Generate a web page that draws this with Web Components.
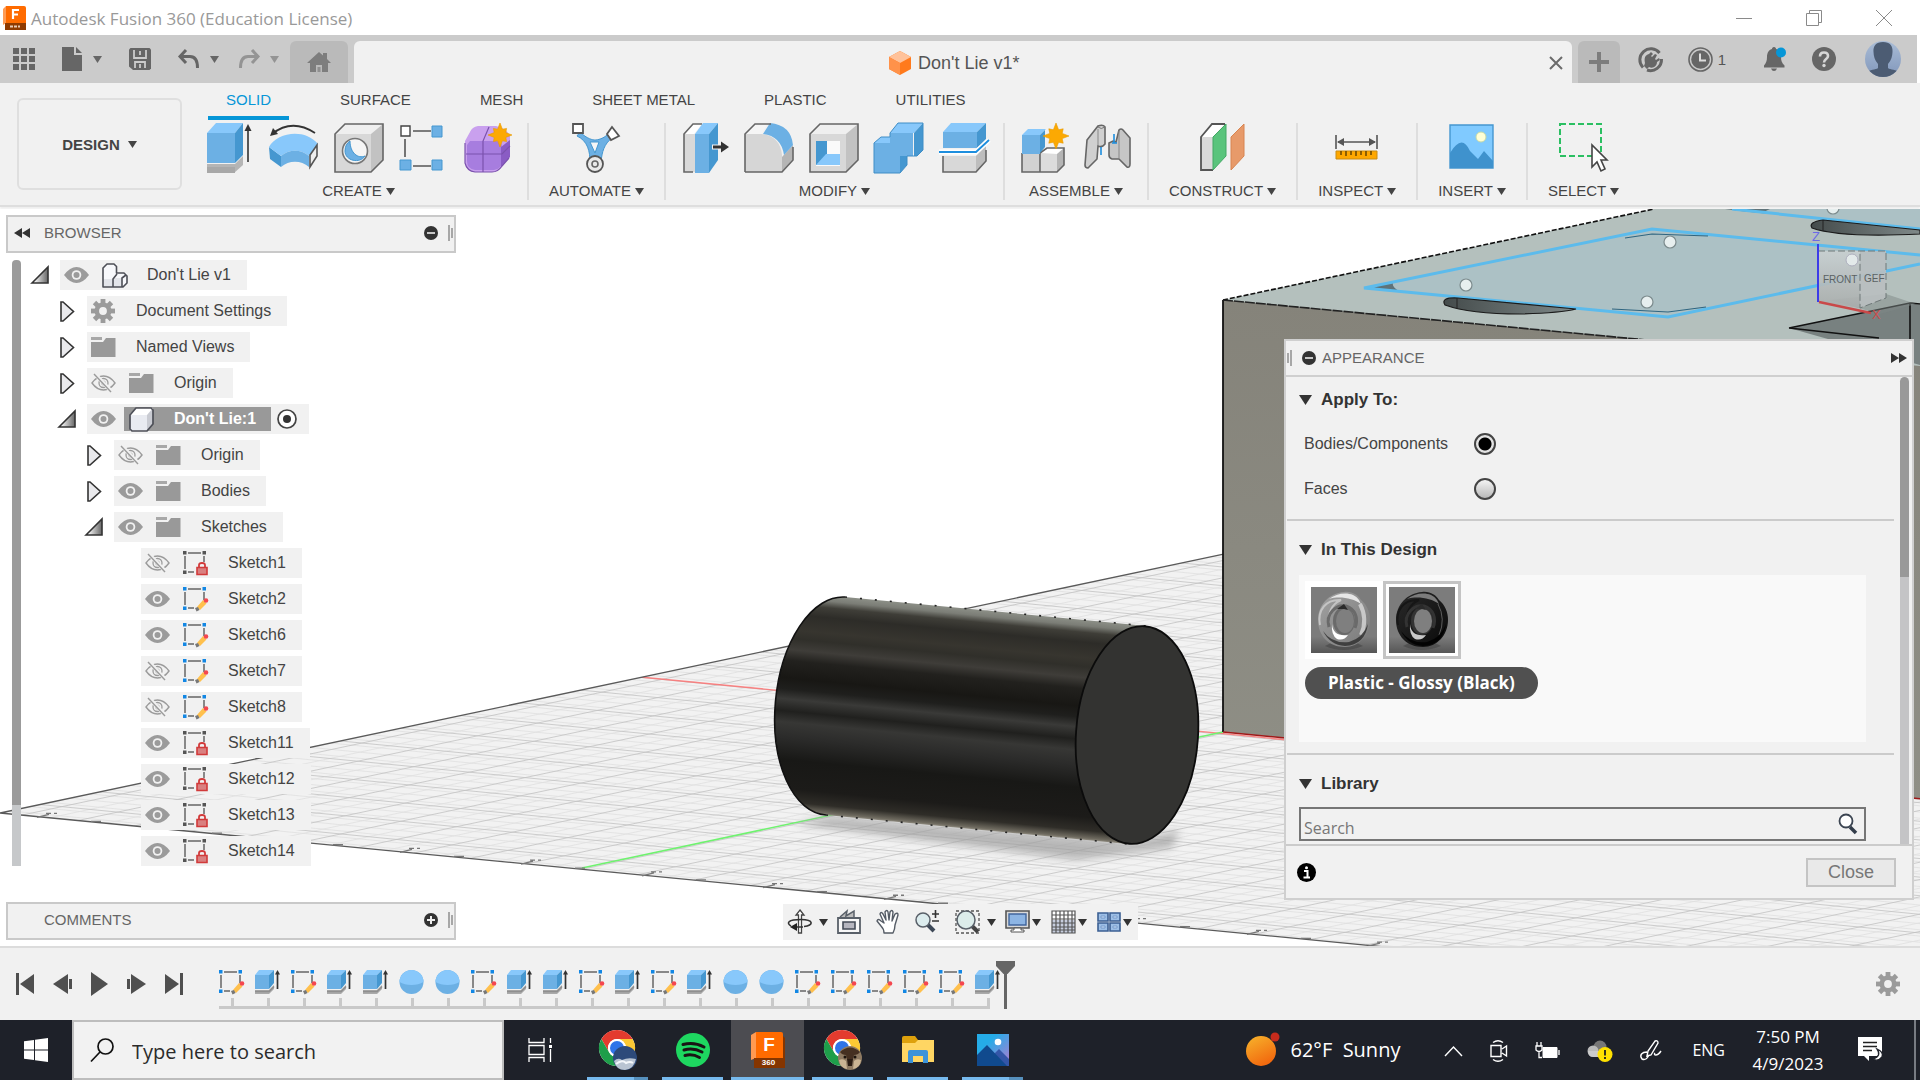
<!DOCTYPE html>
<html lang="en">
<head>
<meta charset="utf-8">
<title>Autodesk Fusion 360 (Education License)</title>
<style>
  html, body { margin: 0; height: 100%; }
  body {
    font-family: "Liberation Sans", Arial, sans-serif;
    font-size: 16px;
    color: #444;
    background: #fff;
    overflow: hidden;
    --ui: "Open Sans", "Noto Sans", sans-serif;
    --panel: #f1f1f1;
    --line: #c9c9c9;
    --blue: #0696d7;
  }
</style>
</head>
<body>
<fusion-app></fusion-app>

<script>
const B1 = '#6cb0e4', B2 = '#88c8fb', B3 = '#4597d0', BS = '#3f8dc6', G = '#666';

const star = (x, y, r, fill = '#fca903') => {
  let d = '';
  for (let i = 0; i < 16; i++) {
    const a = Math.PI * i / 8, q = i % 2 ? r * 0.52 : (i % 4 ? r * 0.78 : r);
    d += `${(x + q * Math.sin(a)).toFixed(1)},${(y - q * Math.cos(a)).toFixed(1)} `;
  }
  return `<polygon points="${d}" fill="${fill}" stroke="#e79a00" stroke-width=".6"/>`;
};

const gear = fill => {
  let teeth = '';
  for (let i = 0; i < 8; i++) teeth += `<rect x="9.6" y="0" width="4.8" height="6" fill="${fill}" transform="rotate(${i * 45} 12 12)"/>`;
  return `${teeth}<circle cx="12" cy="12" r="6.2" fill="none" stroke="${fill}" stroke-width="4.6"/>`;
};

const cubeFace = (w = 1.6) => `fill="none" stroke="#4d4f57" stroke-width="${w}" stroke-linejoin="round"`;

const chrome = `
  <circle cx="19" cy="18" r="18" fill="#fff"/>
  <path d="M3.4 9A18 18 0 0 1 19 0a18 18 0 0 1 15.6 9H19a9 9 0 0 0-7.8 13.5z" fill="#e33b2e"/>
  <path d="M34.6 9A18 18 0 0 1 19 36l7.8-13.5A9 9 0 0 0 19 9z" fill="#fcc934"/>
  <path d="M3.4 9A18 18 0 0 0 19 36l7.8-13.5a9 9 0 0 1-15.6 0z" fill="#1e9e4a"/>
  <circle cx="19" cy="18" r="9" fill="#fff"/><circle cx="19" cy="18" r="7" fill="#2f74e8"/>`;

// name: [width, height, markup]
const ICONS = {
  caret: [9, 7, '<path d="M0 0h9L4.5 7z" fill="currentColor"/>'],
  triangle: [13, 10, '<path d="M0 0h13L6.5 10z" fill="#333"/>'],
  app: [23, 24, `<path d="M3 0h18q2 0 2 2v15H3z" fill="#ff6b00"/><path d="M3 0L0 3v16l3-2z" fill="#ff9b54"/>
    <path d="M2 17h21v7H2z" fill="#8f3a00"/><path d="M10 13V4h6M10 8.5h5" stroke="#fff" stroke-width="2.2" fill="none"/>
    <path d="M7 20.5h10" stroke="#e8c9b4" stroke-width="2" stroke-dasharray="3 1"/>`],
  minimize: [16, 16, '<path d="M0 8.5h16" stroke="#8a8a8a"/>'],
  restore: [16, 16, '<path d="M.5 3.5h12v12H.5zM3.5 3.5v-3h12v12h-3" fill="none" stroke="#8a8a8a"/>'],
  close: [16, 16, '<path d="M0 0l16 16M16 0L0 16" stroke="#8a8a8a"/>'],
  grid9: [22, 22, `<path d="M0 0h6v6H0zM8 0h6v6H8zM16 0h6v6h-6zM0 8h6v6H0zM8 8h6v6H8zM16 8h6v6h-6zM0 16h6v6H0zM8 16h6v6H8zM16 16h6v6h-6z" fill="${G}"/>`],
  file: [21, 24, `<path d="M0 0h12v8h8v16H0z" fill="${G}"/><path d="M14 0v6h6z" fill="${G}"/>`],
  save: [22, 22, `<path d="M1.5 0h19L22 1.5v19L20.5 22H4l-4-3.5v-17z" fill="${G}"/><path d="M5 2v8h12V2M11 3v4" fill="none" stroke="#cbcbcb" stroke-width="1.8"/><path d="M6 20v-6h10v6M11 16v4" fill="none" stroke="#cbcbcb" stroke-width="1.8"/>`],
  undo: [22, 20, '<path d="M8 1L2 7.5 8 14M2.5 7.5H12q7.5 0 7.5 11.5" fill="none" stroke="currentColor" stroke-width="3"/>'],
  redo: [22, 20, '<path d="M14 1l6 6.5-6 6.5M19.5 7.5H10q-7.5 0-7.5 11.5" fill="none" stroke="currentColor" stroke-width="3"/>'],
  home: [24, 20, '<path d="M12 0l4 3.5V1h4v6l4 4h-3v9h-6v-7h-6v7H3v-9H0z" fill="#7d7d7d"/><path d="M10.5 15h3v5h-3z" fill="#8f8f8f"/>'],
  doccube: [22, 24, '<path d="M11 0l11 6v12l-11 6L0 18V6z" fill="#ff7a1c"/><path d="M11 0l11 6-11 6L0 6z" fill="#ffc29a"/><path d="M0 6l11 6v12L0 18z" fill="#ff924a"/>'],
  tabclose: [14, 14, '<path d="M1 1l12 12M13 1L1 13" stroke="#6b6b6b" stroke-width="2"/>'],
  plus: [20, 20, '<path d="M10 0v20M0 10h20" stroke="#7d7d7d" stroke-width="4"/>'],
  plug: [25, 25, `<path d="M5 20.5A11 11 0 1 1 21.5 6M23.5 12A11 11 0 0 1 9 23" fill="none" stroke="${G}" stroke-width="3"/>
    <path d="M7 16c-1-5 0-8 4-9l2-2 2 2-2 2 1 1 3-3 2 1-2 4 1 1 3-2 1 2-3 2c0 4-4 7-8 5l-2 2-3-3z" fill="${G}"/>`],
  clock: [25, 25, `<circle cx="12.5" cy="12.5" r="11.5" fill="none" stroke="${G}" stroke-width="1.6"/><circle cx="12.5" cy="12.5" r="9.3" fill="${G}"/><path d="M12 6.5v7h6" fill="none" stroke="#ddd" stroke-width="2"/>`],
  bell: [24, 24, `<path d="M10 0c1.5 0 2 1 2 2 4 1 5 5 5 8 0 4 1 6 3.5 8.5v2H0v-2C2 16 3 14 3 10c0-3 1-7 5-8 0-1 .5-2 2-2zM7 21.5h6q-1 2.5-3 2.5t-3-2.5z" fill="${G}"/><circle cx="17" cy="5.5" r="5" fill="#0696d7"/>`],
  help: [24, 24, `<circle cx="12" cy="12" r="12" fill="${G}"/><path d="M8 9.5q0-4 4-4t4 3.5c0 3-4 3-4 6.5" fill="none" stroke="#d6d6d6" stroke-width="2.6"/><circle cx="12" cy="18.5" r="1.7" fill="#d6d6d6"/>`],
  avatar: [36, 36, `<defs><linearGradient id="a" x2="0" y2="1"><stop offset="0" stop-color="#a9bcd6"/><stop offset="1" stop-color="#8197bb"/></linearGradient><clipPath id="c"><circle cx="18" cy="18" r="18"/></clipPath></defs>
    <g clip-path="url(#c)"><path d="M0 0h36v36H0z" fill="url(#a)"/><path d="M18 1c7 0 10 4 9.5 10-.2 4-1 8-4.5 12v4c2 2 9 1 11 5v4H2v-4c2-4 9-3 11-5v-4c-3.5-4-4.3-8-4.5-12C8 5 11 1 18 1z" fill="#4c5c73"/></g>`],

  extrude: [50, 50, `<path d="M3 41h28l8-8v9l-9 8H3z" fill="#b5b5b5"/><path d="M3 44h28v6H3z" fill="#a8a8a8"/><path d="M3 10h28v30H3z" fill="${B1}"/><path d="M3 10L12 0h27l-8 10z" fill="${B2}"/><path d="M31 10l8-10v32l-8 8z" fill="${B3}"/>
    <path d="M44 39V5" stroke="#333" stroke-width="1.6"/><path d="M40.5 8L44 1l3.5 7z" fill="#333"/>`],
  revolve: [50, 50, `<path d="M3 11Q23-5 46 10" fill="none" stroke="#333" stroke-width="1.8"/><path d="M1 13l3-8 5 6z" fill="#333"/>
    <path d="M0 24l12 9v11L1 36z" fill="${B3}"/><path d="M0 24C8 9 36 5 49 21l-9 12c-8-7-20-7-28 0z" fill="${B2}"/><path d="M12 33c8-7 20-7 28 0v11c-8-7-20-7-28 0z" fill="${B1}"/><path d="M41 32l7-10v11l-7 11z" fill="#eee" stroke="#555" stroke-width="1.6"/>`],
  hole: [50, 50, `<path d="M1 11h36v38H1z" fill="#d8d8d8"/><path d="M1 11L11 1h38L37 11z" fill="#efefef"/><path d="M37 11L49 1v36L37 49z" fill="#c2c2c2"/><path d="M1 49V11L11 1h38v36L37 49z" fill="none" stroke="#666" stroke-width="1.6"/>
    <circle cx="21" cy="28" r="12.5" fill="#f5f5f5" stroke="#777" stroke-width="1.6"/><path d="M16 18c0 12 8 18 15 15-5 8-20 5-20-5 0-5 2-8 5-10z" fill="${B1}" stroke="${B3}"/>`],
  pattern: [50, 50, `<path d="M14 8h18M14 43h18M6 16v18" stroke="#555" stroke-width="1.6"/><path d="M2 3h9v10H2z" fill="#fff" stroke="#444" stroke-width="1.4"/><path d="M33 3h10v11H33zM33 37h10v10H33zM1 37h11v10H1z" fill="${B1}" stroke="${B3}"/>`],
  form: [50, 50, `<path d="M6 9q2-5 8-6h18q10 2 14 10v20l-9 12q-4 4-9 4H10q-8-1-9-9V18z" fill="#c9a0ee"/><path d="M6 18h26q6 0 6 6v14q0 8-8 9H11Q3 46 3 38V22z" fill="#a77ddf"/><path d="M37 24l9-7v17l-9 10z" fill="#8a5cc4"/><path d="M2 31h36l8-8M19 49V18l6-14M1 20v20q2 8 10 9h17q6 0 10-6l7-8" fill="none" stroke="#7b52ad" stroke-width="1.2"/>${star(36, 12, 12)}`],
  automate: [50, 50, `<path d="M9 9c7 7 13 8 15 8s9-1 14-7l3 5c-8 6-10 14-11 24H19C19 29 17 18 6 13z" fill="${B1}" stroke="${B3}"/><path d="M19 19h9l-4 11z" fill="#f6f6f6" stroke="${B3}"/><path d="M2 1h10v9H2z" fill="#fff" stroke="#555" stroke-width="1.8"/><path d="M41 4l7 9-8 4-4-6z" fill="#fff" stroke="#555" stroke-width="1.8"/><circle cx="24" cy="41" r="8" fill="#e9e9e9" stroke="#555" stroke-width="1.8"/><circle cx="24" cy="41" r="3" fill="none" stroke="#666" stroke-width="1.6"/>`],
  presspull: [50, 50, `<path d="M5 11h11v38H5z" fill="#d9d9d9"/><path d="M5 11L14 1h9l-8 10z" fill="#fff"/><path d="M14 49H5V11L14 1h9" fill="none" stroke="#666" stroke-width="1.6"/><path d="M16 11h14v39H16z" fill="${B1}"/><path d="M16 11L24 0h15l-9 11z" fill="${B2}"/><path d="M30 11L39 0v37l-9 13z" fill="${B3}"/><path d="M34 22.5h8v-4l8 5.5-8 5.5v-4h-8z" fill="#333" stroke="#f1f1f1" stroke-width="2" paint-order="stroke"/>`],
  fillet: [50, 50, `<path d="M1 11L11 1h12l-5 10z" fill="#f5f5f5"/><path d="M1 49V11h17q18 2 20 21v17z" fill="#d6d6d6"/><path d="M38 34l11-12v14L38 49z" fill="#b5b5b5"/><path d="M19 11L26 0q21 2 23 22L40 32Q37 13 19 11z" fill="${B1}"/><path d="M1 49V11L11 1h16M49 24v13L38 49H1" fill="none" stroke="#666" stroke-width="1.6"/>`],
  shell: [50, 50, `<path d="M1 11h36v38H1z" fill="#d8d8d8"/><path d="M1 11L11 1h38L37 11z" fill="#efefef"/><path d="M37 11L49 1v36L37 49z" fill="#c2c2c2"/><path d="M1 49V11L11 1h38v36L37 49z" fill="none" stroke="#666" stroke-width="1.6"/><path d="M7 18h24v25H7z" fill="#fafafa"/><path d="M7 18h11v14L8 42H7z" fill="${B3}"/><path d="M7 42l10-11h14v11z" fill="${B2}"/>`],
  combine: [50, 50, `<path d="M0 20h16V10h23v23H26v17H0z" fill="${B1}"/><path d="M0 20l7-6h9v6zM16 10l8-10h25l-9 10z" fill="${B2}"/><path d="M40 10l9-10v27l-6 6h-3zM26 42V33h7v9l-7 8z" fill="${B3}"/><path d="M0 20l7-6h9v-4l8-10h25v27l-6 6h-10v9l-7 8H0z" fill="none" stroke="${BS}"/>`],
  split: [50, 50, `<path d="M4 9h34v16H4z" fill="${B1}"/><path d="M4 9L12 0h35l-9 9z" fill="${B2}"/><path d="M38 9l9-9v16l-9 9z" fill="${B3}"/><path d="M4 33h33l10-10v15L37 49H4z" fill="#d8d8d8"/><path d="M37 33v16l10-11V23z" fill="#bdbdbd"/><path d="M4 33v16h33l10-11V27" fill="none" stroke="#666" stroke-width="1.6"/><path d="M0 29h37l13-12" fill="none" stroke="#fff" stroke-width="5"/><path d="M0 29h37l13-12" fill="none" stroke="#1d8ede" stroke-width="1.8"/>`],
  newcomp: [50, 50, `<path d="M4 30h18v19H4z" fill="#d2d2d2"/><path d="M23 30h16v19H23z" fill="#dcdcdc"/><path d="M23 30l6-5h17l-7 6z" fill="#fff"/><path d="M39 31l7-6v17l-7 7z" fill="#b5b5b5"/><path d="M4 30v19h35l7-7V25H29l-7 5v19M4 49h35" fill="none" stroke="#666" stroke-width="1.6"/><path d="M4 12h18v19H4z" fill="${B1}"/><path d="M4 12l6-6h18l-6 6z" fill="${B2}"/><path d="M22 12l5-5v17l-5 6z" fill="${B3}"/>${star(38, 13, 13)}`],
  joint: [50, 50, `<path d="M4 17L15 3q5-2 7 1v17q-3 4-7 2l-1 13-9 9q-3 0-3-3z" fill="#d0d0d0" stroke="#666" stroke-width="1.6"/><path d="M15 6v17" stroke="#888"/><path d="M15 4q3 3 7 0" fill="none" stroke="#777"/><path d="M36 7q2-2 4 0l7 8v26q0 4-3 3l-8-8h-7q-3-1-3-4V20l4-2 3 1z" fill="#c6c6c6" stroke="#666" stroke-width="1.6"/><path d="M36 8v27" stroke="#888"/><path d="M18 24v8M31 11v9M29 20h5" stroke="#1d8ede" stroke-width="1.6"/>`],
  construct: [50, 50, `<path d="M3 14h12v33H3z" fill="#dadada"/><path d="M3 14L14 1h12L15 14z" fill="#fff"/><path d="M15 47H3V14L14 1h13" fill="none" stroke="#555" stroke-width="1.8"/><path d="M15 14L28 1v32L15 47z" fill="#5ac47c" stroke="#43a865"/><path d="M33 14L46 1v32L33 47z" fill="#e79a6a" stroke="#d88450"/>`],
  inspect: [50, 50, `<path d="M4 12v14M45 12v14M6 19h37" stroke="#555" stroke-width="1.6"/><path d="M5 19l7-4v8zM44 19l-7-4v8z" fill="#555"/><path d="M4 28h41v8H4z" fill="#ffa800" stroke="#c98c13"/><path d="M9 28v4M14 28v5M19 28v4M24 28v5M29 28v4M34 28v5M39 28v4" stroke="#604000" stroke-width="1.4"/>`],
  insert: [50, 50, `<path d="M3 2h43v43H3z" fill="#80caff" stroke="${B3}" stroke-width="1.4"/><circle cx="34" cy="14" r="5" fill="#ffffd5" stroke="#c5d9a8"/><path d="M3 30q12-20 20-2l8 8 6-8 9 10v7H3z" fill="#3f92cd"/>`],
  select: [50, 50, `<path d="M1 1h41v32H1z" fill="none" stroke="#2bbf62" stroke-width="2" stroke-dasharray="6 3"/><path d="M33 22v22l5-5 4 9 4-2-4-9h6z" fill="#fff" stroke="#444" stroke-width="1.6"/>`],

  rewindpanel: [16, 10, '<path d="M8 0v10L0 5zM16 0v10L8 5z" fill="#333"/>'],
  forwardpanel: [16, 10, '<path d="M0 0v10l8-5zM8 0v10l8-5z" fill="#333"/>'],
  minus: [14, 14, '<circle cx="7" cy="7" r="7" fill="#333"/><path d="M3 7h8" stroke="#eee" stroke-width="1.6"/>'],
  add: [14, 14, '<circle cx="7" cy="7" r="7" fill="#333"/><path d="M3 7h8M7 3v8" stroke="#eee" stroke-width="2"/>'],
  grip: [5, 16, '<path d="M1 0v16M4 3v10" stroke="#888" stroke-width="1.4"/>'],
  gripleft: [5, 16, '<path d="M4 0v16M1 3v10" stroke="#888" stroke-width="1.4"/>'],
  open: [18, 18, '<defs><linearGradient id="g"><stop offset=".2" stop-color="#eee"/><stop offset="1" stop-color="#666"/></linearGradient></defs><path d="M1 17L17 1v16z" fill="url(#g)" stroke="#333" stroke-width="1.6"/>'],
  shut: [17, 21, '<path d="M3 1h2l10.5 9.5L5 20H3z" fill="#e9e9ec" stroke="#333" stroke-width="1.6"/>'],
  eye: [25, 18, '<path d="M0 9Q6 1 12.5 1T25 9q-6 8-12.5 8T0 9z" fill="#9b9b9b"/><circle cx="12.5" cy="9" r="4.8" fill="#f1f1f1"/><circle cx="12.5" cy="9" r="3" fill="#9b9b9b"/>'],
  eyeoff: [25, 18, '<path d="M1 9Q6 2 12.5 2T24 9q-5 7-11.5 7T1 9z" fill="none" stroke="#9b9b9b" stroke-width="1.4"/><circle cx="12.5" cy="9" r="4.5" fill="none" stroke="#9b9b9b" stroke-width="1.3"/><circle cx="12.5" cy="9" r="2" fill="none" stroke="#9b9b9b"/><path d="M4 0l17 18" stroke="#f1f1f1" stroke-width="4"/><path d="M3 0l17 18" stroke="#9b9b9b" stroke-width="1.4"/>'],
  gear: [24, 24, gear('#9b9b9b')],
  folder: [25, 20, '<path d="M0 0h11v3H0z" fill="#a8a8a8"/><path d="M0 5h12l3-4h9.5v19H0z" fill="#999"/>'],
  component: [26, 25, `<path d="M1 6l5-5h9v9h10v9l-5 5H1z" fill="#f7f8fb"/><path d="M1 16h9v8H1zM11 15h9v9h-9z" fill="#e3e5ea"/><path d="M1 24V5l4-4h7l2.500 2.500V10h7.500l3 3v7l-4 4zM11 24v-8l4-5M20 24v-9l4-3" ${cubeFace(1.6)}/>`],
  cube: [25, 25, `<path d="M1 7l6-6h17v16l-6 7H1z" fill="#fff"/><path d="M1 8h17v16H1z" fill="#e9ebf1"/><path d="M18 8l6-7v16l-6 7z" fill="#c9cbd2"/><path d="M1 22V8l6-7h15l2 2v14l-6 7H3z" ${cubeFace(1.7)}/>`],
  sketch: [25, 25, '<path d="M5 2h13M2 5v13M21 5v8M5 21h6" stroke="#666" stroke-width="1.5"/><path d="M0 0h3.5v3.5H0zM19.5 0H23v3.5h-3.5zM0 19.5h3.5V23H0z" fill="#1287e4"/><path d="M14 20l6-7 3.5 3.5L17 23z" fill="#ffc04d"/><circle cx="23" cy="13.5" r="2.3" fill="#f4474f"/><path d="M12 21l3-1 1.5 3-3 1.5z" fill="#777"/>'],
  sketchlock: [25, 25, '<path d="M5 2h13M2 5v13M21 5v6M5 21h6" stroke="#666" stroke-width="1.5"/><path d="M0 0h3.5v3.5H0zM19.5 0H23v3.5h-3.5zM0 19.5h3.5V23H0z" fill="#555"/><path d="M16 17v-3q0-2 3-2t3 2v3" fill="none" stroke="#d13a3a" stroke-width="1.8"/><path d="M14 16.5h10v7H14z" fill="#d98080" stroke="#d13a3a" stroke-width="1.6"/>'],
  target: [20, 20, '<circle cx="10" cy="10" r="9" fill="#fff" stroke="#444" stroke-width="1.7"/><circle cx="10" cy="10" r="4" fill="#333"/>'],

  orbit: [24, 24, '<path d="M12 0l4 5h-2.5v18h-3V5H8z" fill="#fff" stroke="#444" stroke-width="1.3"/><path d="M16 16.5c10-1 10-7-3-7S-2 13 3 16M15 17H7" fill="none" stroke="#333" stroke-width="1.6"/><path d="M2 17l7-4v8z" fill="#222"/>'],
  look: [24, 24, '<path d="M3 7l7-6-1 5 8-5v6" fill="#bbb" stroke="#596069" stroke-width="1.5"/><path d="M1 8h22v15H1z" fill="#f7f7f7" stroke="#596069" stroke-width="1.8"/><path d="M6 12h12v7H6z" fill="#b6b6bf" stroke="#444b57" stroke-width="1.6"/>'],
  hand: [24, 24, '<path d="M8 23q0-4-3-7l-4-5q1-3 4 0l3 2-4-9q1-3 3 0l3 6L9 2q2-3 3 0l1 8 1-8q2-3 3 0l-1 9 3-7q3-2 3 1l-3 10q0 4-2 8z" fill="#fff" stroke="#555c66" stroke-width="1.4" stroke-linejoin="round"/>'],
  zoom: [25, 24, '<path d="M13 15l6 6" stroke="#3d4857" stroke-width="4"/><circle cx="8" cy="10" r="7" fill="#dcecee" stroke="#596069" stroke-width="1.5"/><path d="M17 4h7M20.5 0v8M17 11h7" stroke="#333" stroke-width="1.6"/>'],
  zoomfit: [25, 24, '<path d="M1 1h23v22H1z" fill="none" stroke="#555" stroke-width="1.3" stroke-dasharray="3 2"/><path d="M17 16l6 6" stroke="#444" stroke-width="4"/><circle cx="11" cy="10" r="9" fill="#dcecea" stroke="#596069" stroke-width="1.5"/>'],
  monitor: [25, 24, '<path d="M1 1h23v17H1z" fill="#d9d9d9" stroke="#555" stroke-width="1.6"/><path d="M4 4h17v11H4z" fill="#8db5e4" stroke="#41669d" stroke-width="1.4"/><path d="M9 18h7v2h3v2H6v-2h3z" fill="#fff" stroke="#555"/>'],
  mesh: [25, 24, '<path d="M1 1h23v22H1z" fill="#fff"/><path d="M1 10h23v13H1z" fill="#c7cede"/><path d="M1 1h23v22H1zM5 1v22M9 1v22M13 1v22M17 1v22M21 1v22M1 5h23M1 9h23M1 13h23M1 17h23M1 20h23" fill="none" stroke="#555" stroke-width="1.2"/>'],
  views: [24, 20, '<path d="M1 1h10v8H1zM13 1h10v8H13zM1 11h10v8H1zM13 11h10v8H13z" fill="#9dbfe6" stroke="#3b5f93" stroke-width="1.6"/><path d="M4 4h4v2H4zM16 4h4v2h-4zM4 14h4v2H4zM16 14h4v2h-4z" fill="#c5dbf3" stroke="#6d93c4" stroke-width=".8"/>'],

  tostart: [19, 22, '<path d="M1.5 0v22" stroke="#4f4f4f" stroke-width="3"/><path d="M18 1v20L4 11z" fill="#4f4f4f"/>'],
  back: [19, 22, '<path d="M15 1v20L0 11z" fill="#4f4f4f"/><path d="M17.5 6v10" stroke="#4f4f4f" stroke-width="3"/>'],
  play: [19, 24, '<path d="M1 0v24l17-12z" fill="#4f4f4f"/>'],
  next: [19, 22, '<path d="M4 1v20l15-10z" fill="#4f4f4f"/><path d="M1.5 6v10" stroke="#4f4f4f" stroke-width="3"/>'],
  toend: [19, 22, '<path d="M17.5 0v22" stroke="#4f4f4f" stroke-width="3"/><path d="M1 1v20l14-10z" fill="#4f4f4f"/>'],
  solid: [25, 25, `<path d="M0 20h14l5-5v4l-5 5H0z" fill="#aaa"/><path d="M0 5h14v14H0z" fill="${B1}"/><path d="M0 5l4-5h15l-5 5z" fill="${B2}"/><path d="M14 5l5-5v13l-5 6z" fill="${B3}"/><path d="M0 21.5h14l5-5" stroke="#8f8f8f" stroke-width="1.6" fill="none"/><path d="M22.5 19V3" stroke="#333" stroke-width="1.7"/><path d="M20 4.5L22.5 0 25 4.5z" fill="#333"/>`],
  sphere: [25, 24, `<circle cx="12.5" cy="12" r="12" fill="${B1}"/><path d="M.5 12a12 12 0 0 1 24 0q-5 3-12 3T.5 12z" fill="${B2}"/>`],
  marker: [19, 48, '<path d="M0 0h19v5l-7.5 8h-4L0 5z" fill="#666"/><path d="M9.5 10v38" stroke="#666" stroke-width="3"/>'],

  windows: [24, 24, '<path d="M0 3.3L10 2v9.5H0zM11 1.8L24 0v11.5H11zM0 12.5h10V22L0 20.7zM11 12.5h13V24l-13-1.8z" fill="#fff"/>'],
  search: [24, 24, '<circle cx="15.5" cy="8.5" r="7.5" fill="none" stroke="#111" stroke-width="1.7"/><path d="M10 14L1 23.5" stroke="#111" stroke-width="1.7"/>'],
  taskview: [25, 24, '<path d="M1 0v4.5h15V0M1 24v-4.5h15V24M1 7.5h15v9H1zM22.5 0v5M22.5 11v13" fill="none" stroke="#fff" stroke-width="1.3"/><path d="M21 7h3v3h-3z" fill="#fff"/>'],
  chrome1: [39, 40, `${chrome}<circle cx="27" cy="28" r="12" fill="#2d4a7a"/><path d="M16 31q4-4 8-1 6-3 14-1-2 10-11 11-9 0-11-9z" fill="#b9c4d2"/><path d="M18 34q6-5 10-1 4-2 7 0" stroke="#f3f6fa" stroke-width="2" fill="none"/>`],
  spotify: [34, 34, '<circle cx="17" cy="17" r="17" fill="#1ed760"/><path d="M7 11.5q11-3 21 2.5M8 17q9.5-2.5 18 2M9 22.5q7.5-2 14.5 2" fill="none" stroke="#191414" stroke-width="3" stroke-linecap="round"/>'],
  fusion: [34, 36, '<path d="M5 0h25q2 0 2 2v24H5z" fill="#ff6b00"/><path d="M5 0L0 3v25l5-2z" fill="#ff9a52"/><path d="M3 26h29V4l2 2v30H3z" fill="#853500"/>'],
  chrome2: [39, 40, `${chrome}<circle cx="27" cy="28" r="12" fill="#8e7a62"/><path d="M17 22q10-9 20 0-2 3-6 3l-1 4h-6l-1-4q-4 0-6-3z" fill="#453021"/><path d="M16 30q4-2 7 1l1 8q-7-1-8-9zM38 30q-4-2-7 1l-1 8q7-1 8-9z" fill="#cbb594"/><path d="M24 29h6l-1 7h-4z" fill="#2b1d14"/><circle cx="22" cy="27" r="1.5" fill="#1a120c"/><circle cx="32" cy="27" r="1.5" fill="#1a120c"/>`],
  explorer: [32, 28, '<path d="M0 2q0-2 2-2h11l3 4v4H0z" fill="#dea10c"/><path d="M0 7h13l3-3h16v22H0z" fill="#ffd663"/><path d="M6 27V16q0-2 2-2h16q2 0 2 2v11h-5v-7H11v7z" fill="#3b93da"/>'],
  photos: [32, 32, '<defs><linearGradient id="p" x2="1" y2="1"><stop offset=".3" stop-color="#25ace8"/><stop offset="1" stop-color="#b57ad0"/></linearGradient></defs><path d="M0 0h32v32H0z" fill="url(#p)"/><circle cx="21" cy="8" r="3.3" fill="#fff"/><path d="M14 23l8-8 10 10v7H14z" fill="#3456a8"/><path d="M0 21l10-10 20 21H0z" fill="#104a8e"/>'],
  sun: [34, 36, '<defs><linearGradient id="s" x2=".5" y2="1"><stop offset="0" stop-color="#f7b52c"/><stop offset="1" stop-color="#f26a0f"/></linearGradient></defs><circle cx="15" cy="19" r="15" fill="url(#s)"/><circle cx="29" cy="5" r="4.5" fill="#c62b1c"/>'],
  chevron: [19, 11, '<path d="M1 10l8.5-9L18 10" fill="none" stroke="#fff" stroke-width="1.4"/>'],
  camera: [18, 22, '<path d="M1 5.5h10v11H1zM12 9l4.5-3v10L12 13M3 2.5Q8-1 13 2.5M3 19.5q5 3.5 10 0" fill="none" stroke="#fff" stroke-width="1.4"/>'],
  battery: [25, 18, '<path d="M8 5.5h14v10H8z" fill="#fff" stroke="#fff"/><path d="M24 8v5M2 0v4M6 0v4M1 4h6v4q-3 3-6 0zM4 10v5.5h3" fill="none" stroke="#fff" stroke-width="1.3"/>'],
  cloud: [26, 22, '<circle cx="13" cy="7" r="6.5" fill="#777"/><circle cx="6" cy="11" r="5.5" fill="#bbb"/><path d="M1 11h15v6H6q-5 0-5-6z" fill="#ccc"/><circle cx="18" cy="14.5" r="7.5" fill="#ffe100"/><path d="M18 10v5.5M18 17v2" stroke="#222" stroke-width="1.8"/>'],
  pen: [22, 22, '<path d="M7 16l1-5L15 1q3-1 3 2L11 15zM7 12c-5 0-8 3-5 7 4 2 6-2 7-4M15 13c-2 2 2 4 6-2" fill="none" stroke="#fff" stroke-width="1.4"/>'],
  notify: [26, 26, '<path d="M0 0h24v19H11v5l-5-5H0z" fill="#fff"/><path d="M5 5.5h14M5 9.5h14M5 13.5h9" stroke="#222" stroke-width="1.3"/><path d="M19 12q5 7-4 10 5 3 9-2 2-5-5-8z" fill="#fff" stroke="#1e2129" stroke-width="1.3"/>'],
  lens: [20, 22, '<path d="M12 14l6 6" stroke="#333d4a" stroke-width="3.5"/><circle cx="8" cy="8" r="6.5" fill="#fff" stroke="#3c4552" stroke-width="1.8"/>'],
  info: [19, 19, '<circle cx="9.5" cy="9.5" r="9.5" fill="#000"/><path d="M7 8h3.5v6.5M6.5 14.5H13" stroke="#fff" stroke-width="2" fill="none"/><circle cx="9.5" cy="4.7" r="1.5" fill="#fff"/>']
};

const torus = dark => {
  const c = dark
    ? { a: '#2a2a2a', b: '#0a0a0a', lo: '#000', hi: '#8c8c8c', hi2: '#c8c8c8', rim: '#161616', swirl: '#333' }
    : { a: '#a2a2a2', b: '#7a7a7a', lo: '#333', hi: '#f4f4f4', hi2: '#fff', rim: '#c4c4c4', swirl: '#6a6a6a' };
  return `<svg viewBox="0 0 66 66" width="66" height="66" aria-hidden="true">
    <defs><linearGradient id="bg" x2="0" y2="1"><stop offset=".75" stop-color="#7c7c7c"/><stop offset="1" stop-color="#565656"/></linearGradient>
    <linearGradient id="ring" x2="1" y2="1"><stop offset="0" stop-color="${c.a}"/><stop offset="1" stop-color="${c.b}"/></linearGradient></defs>
    <path d="M0 0h66v66H0z" fill="url(#bg)"/>
    <path d="M14 59q18 8 38 0l-8-4H22z" fill="#444" opacity=".6"/>
    <path d="M33 5c8-1 14 3 17 8 6 5 9 12 9 20 0 15-11 27-25 27C18 60 7 49 7 33 7 18 18 6 33 5z" fill="url(#ring)"/>
    <path d="M18 12C27 5 42 4 48 13l2 4C42 11 28 9 18 12z" fill="${c.hi}" opacity=".85"/>
    <path d="M9 38C6 23 15 12 30 13c-9 4-14 13-12 26" fill="none" stroke="${c.rim}" stroke-width="2"/>
    <path d="M49 17q8 15 1 31" fill="none" stroke="${c.hi}" stroke-width="${dark ? 1 : 4}" opacity=".6"/>
    <path d="M12 44q9 13 26 11 14-4 19-18-3 21-23 22-15-1-22-15z" fill="${c.lo}" opacity=".85"/>
    <path d="M18 40C14 26 26 17 35 19c9 3 13 12 9 22" fill="none" stroke="${c.swirl}" stroke-width="3"/>
    <ellipse cx="33" cy="34" rx="11" ry="14" fill="${c.swirl}"/>
    <ellipse cx="34" cy="34" rx="9" ry="12" fill="#7f7f7f"/>
    <path d="M26 22l7-5 4 6-4-1z" fill="#2a2a2a"/>
    <path d="M21 37q1 13 16 11-4 6-11 4-6-4-5-15z" fill="${c.hi2}"/></svg>`;
};

class FusionElement extends HTMLElement {
  connectedCallback() {
    if (this.shadowRoot) return;
    this.attachShadow({ mode: 'open' });
    this.shadowRoot.innerHTML = `
      <style>
        :host { display: block; }
        * { box-sizing: border-box; }
        button { display: inline-flex; align-items: center; justify-content: center; font: inherit; color: inherit; background: none; border: 0; padding: 0; margin: 0; cursor: pointer; }
        ${this.styles()}
      </style>
      ${this.render()}`;
  }
  styles() { return ''; }
  render() { return ''; }
}

class FusionIcon extends FusionElement {
  styles() {
    return `
      :host { display: inline-flex; flex: none; }
      svg { display: block; overflow: visible; }`;
  }
  render() {
    const [w, h, art] = ICONS[this.getAttribute('name')];
    return `<svg width="${w}" height="${h}" viewBox="0 0 ${w} ${h}" aria-hidden="true">${art}</svg>`;
  }
}

const icon = name => `<fusion-icon name="${name}"></fusion-icon>`;
const iconButton = (name, label) => `<button aria-label="${label}">${icon(name)}</button>`;

class TitleBar extends FusionElement {
  styles() {
    return `
      :host { height: 35px; background: #fff; }
      .bar { display: flex; align-items: center; height: 100%; padding: 0 28px 0 3px; gap: 5px; }
      span { flex: 1; padding-top: 2px; font: 17px/24px var(--ui); color: #999; white-space: nowrap; }
      .controls { display: flex; gap: 54px; }`;
  }
  render() {
    return `
      <div class="bar">
        ${icon('app')}<span>Autodesk Fusion 360 (Education License)</span>
        <div class="controls">
          ${iconButton('minimize', 'Minimize')}${iconButton('restore', 'Restore')}${iconButton('close', 'Close window')}
        </div>
      </div>`;
  }
}

class DocumentTabs extends FusionElement {
  styles() {
    return `
      :host { background: #cbcbcb; margin-right: 3px; }
      .strip { display: flex; align-items: stretch; height: 48px; padding-top: 6px; }
      .quick { display: flex; align-items: center; width: 290px; padding: 0 0 6px 13px; color: #666; }
      .quick button { gap: 10px; margin-right: 27px; }
      .quick .pair { margin-right: 19px; }
      .quick .off { color: #949494; margin-right: 0; }
      .home, .new { background: #bababa; border-radius: 6px 6px 0 0; }
      .home { width: 58px; margin-right: 6px; }
      .new { width: 42px; margin: 0 18px 0 6px; }
      .doc { flex: 1; display: flex; align-items: center; background: var(--panel); border-radius: 6px 6px 0 0; padding: 1px 9px 0 6px; }
      .name { flex: 1; display: flex; align-items: center; justify-content: center; gap: 7px; font-size: 18px; line-height: 22px; color: #555; }
      .tools { display: flex; align-items: center; padding: 0 16px 6px 0; font-size: 15px; color: #555; }
      .tools button { gap: 5px; }
      .tools .count { margin: 0 38px 0 25px; }
      .tools .help { margin: 0 29px 0 24px; }`;
  }
  render() {
    return `
      <div class="strip">
        <div class="quick">
          ${iconButton('grid9', 'Data panel')}
          <button aria-label="File">${icon('file')}${icon('caret')}</button>
          ${iconButton('save', 'Save')}
          <button class="pair" aria-label="Undo">${icon('undo')}${icon('caret')}</button>
          <button class="off" aria-label="Redo">${icon('redo')}${icon('caret')}</button>
        </div>
        <button class="home" aria-label="Home">${icon('home')}</button>
        <div class="doc"><div class="name">${icon('doccube')}<span>Don't Lie v1*</span></div>${iconButton('tabclose', 'Close tab')}</div>
        <button class="new" aria-label="New design">${icon('plus')}</button>
        <div class="tools">
          ${iconButton('plug', 'Extensions')}
          <button class="count" aria-label="Job status">${icon('clock')}<span>1</span></button>
          ${iconButton('bell', 'Notifications')}
          <button class="help" aria-label="Help">${icon('help')}</button>
          ${iconButton('avatar', 'Account')}
        </div>
      </div>`;
  }
}

class RibbonGroup extends FusionElement {
  styles() {
    return `
      :host { border-right: 2px solid #dedede; height: 77px; }
      :host([last]) { border-right: 0; }
      .icons { display: flex; justify-content: center; height: 50px; padding: 0 6px; }
      .menu { gap: 4px; width: 100%; padding: 0 20px; margin-top: 8px; font-size: 15px; line-height: 20px; color: #444; white-space: nowrap; }
      ::slotted(fusion-icon) { width: 65px; justify-content: center; }`;
  }
  render() {
    return `<div class="icons"><slot></slot></div><button class="menu">${this.getAttribute('label')} ${icon('caret')}</button>`;
  }
}

class RibbonBar extends FusionElement {
  styles() {
    return `
      :host { background: var(--panel); border-bottom: 2px solid #dedede; box-shadow: 0 2px 2px #eee; }
      .ribbon { display: flex; height: 122px; padding: 6px 16px 0 17px; }
      .workspace { gap: 8px; width: 165px; height: 92px; margin-top: 9px; border: 2px solid #dfdfdf; border-radius: 6px; font-size: 15px; font-weight: bold; color: #444; }
      .main { flex: 1; margin-left: 8px; }
      nav { display: flex; gap: 33px; padding-left: 18px; height: 34px; }
      nav a { height: 31px; padding: 0 18px; font-size: 15px; line-height: 22px; color: #444; text-decoration: none; white-space: nowrap; border-bottom: 4px solid transparent; }
      nav a.on { color: var(--blue); border-bottom-color: var(--blue); }
      .groups { display: flex; }`;
  }
  render() {
    const tabs = ['SOLID', 'SURFACE', 'MESH', 'SHEET METAL', 'PLASTIC', 'UTILITIES'];
    const groups = [
      ['CREATE', ['extrude', 'revolve', 'hole', 'pattern', 'form']],
      ['AUTOMATE', ['automate']],
      ['MODIFY', ['presspull', 'fillet', 'shell', 'combine', 'split']],
      ['ASSEMBLE', ['newcomp', 'joint']],
      ['CONSTRUCT', ['construct']],
      ['INSPECT', ['inspect']],
      ['INSERT', ['insert']],
      ['SELECT', ['select']]
    ];
    return `
      <div class="ribbon">
        <button class="workspace">DESIGN ${icon('caret')}</button>
        <div class="main">
          <nav>${tabs.map((t, i) => `<a href="#${t.toLowerCase().replace(' ', '-')}" class="${i ? '' : 'on'}">${t}</a>`).join('')}</nav>
          <div class="groups">
            ${groups.map(([label, icons], i) => `<ribbon-group label="${label}"${i === groups.length - 1 ? ' last' : ''}>${icons.map(icon).join('')}</ribbon-group>`).join('')}
          </div>
        </div>
      </div>`;
  }
}

class PanelHeader extends FusionElement {
  styles() {
    return `
      :host { background: var(--panel); border: 2px solid var(--line); }
      .head { display: flex; align-items: center; height: 34px; padding: 0 1px 2px 6px; font-size: 15px; line-height: 20px; color: #666; }
      .lead { width: 30px; display: flex; }
      .title { flex: 1; }
      .act { margin-right: 10px; }`;
  }
  render() {
    return `
      <div class="head">
        <span class="lead">${this.hasAttribute('collapse') ? iconButton('rewindpanel', 'Collapse') : ''}</span>
        <span class="title"><slot></slot></span>
        <button class="act" aria-label="Toggle panel">${icon(this.getAttribute('action'))}</button>
        ${icon('grip')}
      </div>`;
  }
}

class TreeRow extends FusionElement {
  styles() {
    const level = Number(this.getAttribute('level'));
    return `
      :host { display: flex; align-items: center; height: 30px; padding-left: ${level * 27}px; }
      .arrow { width: 29px; display: flex; }
      .chip { display: flex; align-items: center; height: 30px; padding: 0 16px 0 4px; background: var(--panel); white-space: nowrap; }
      .eye { width: 38px; display: flex; }
      .item { display: flex; align-items: center; height: 24px; }
      .kind { width: 45px; display: flex; }
      :host([selected]) .chip { padding-right: 12px; }
      :host([selected]) .item { background: #999; color: #fff; font-weight: bold; padding: 0 15px 0 5px; margin: 0 6px 0 -5px; }`;
  }
  render() {
    const arrow = this.getAttribute('arrow'), eye = this.getAttribute('eye');
    return `
      <span class="arrow">${arrow ? iconButton(arrow, 'Expand') : ''}</span>
      <div class="chip">
        ${eye ? `<span class="eye">${iconButton(eye, 'Visibility')}</span>` : ''}
        <span class="item"><span class="kind">${icon(this.getAttribute('kind'))}</span><slot></slot></span>
        ${this.hasAttribute('selected') ? icon('target') : ''}
      </div>`;
  }
}

class BrowserTree extends FusionElement {
  styles() {
    return `
      .wrap { display: flex; gap: 10px; padding-left: 6px; }
      .bar { width: 9px; border-radius: 4px 4px 0 0; background: linear-gradient(#9b9b9b 90%, #c6c8ca 90%); }
      .rows { display: flex; flex-direction: column; gap: 6px; }`;
  }
  render() {
    const rows = [
      [0, 'open', 'eye', 'component', "Don't Lie v1"],
      [1, 'shut', '', 'gear', 'Document Settings'],
      [1, 'shut', '', 'folder', 'Named Views'],
      [1, 'shut', 'eyeoff', 'folder', 'Origin'],
      [1, 'open', 'eye', 'cube', "Don't Lie:1", true],
      [2, 'shut', 'eyeoff', 'folder', 'Origin'],
      [2, 'shut', 'eye', 'folder', 'Bodies'],
      [2, 'open', 'eye', 'folder', 'Sketches'],
      [3, '', 'eyeoff', 'sketchlock', 'Sketch1'],
      [3, '', 'eye', 'sketch', 'Sketch2'],
      [3, '', 'eye', 'sketch', 'Sketch6'],
      [3, '', 'eyeoff', 'sketch', 'Sketch7'],
      [3, '', 'eyeoff', 'sketch', 'Sketch8'],
      [3, '', 'eye', 'sketchlock', 'Sketch11'],
      [3, '', 'eye', 'sketchlock', 'Sketch12'],
      [3, '', 'eye', 'sketchlock', 'Sketch13'],
      [3, '', 'eye', 'sketchlock', 'Sketch14']
    ];
    return `
      <div class="wrap">
        <div class="bar"></div>
        <div class="rows">
          ${rows.map(([level, arrow, eye, kind, name, sel]) => `<tree-row level="${level}" arrow="${arrow}" eye="${eye}" kind="${kind}"${sel ? ' selected' : ''}>${name}</tree-row>`).join('')}
        </div>
      </div>`;
  }
}

class SceneView extends FusionElement {
  styles() {
    return `
      :host { position: absolute; inset: 0; overflow: hidden; background: #fff; }
      svg { display: block; width: 100%; height: 100%; }`;
  }

  // Ground plane: two families of parallel lines leaving the left corner
  grid() {
    let minor = '', major = '';
    for (let i = 0; i < 190; i++) {
      const x = 10 * i, y = 813 - x * 0.212;
      const line = `M${x} ${y.toFixed(1)}l2000 196`;
      if (i % 6 === 4) major += line; else if (i % 2) minor += line;
    }
    for (let i = 0; i < 320; i++) {
      const x = 14 * i + 8, y = 813 + x * 0.0967;
      const line = `M${x} ${y.toFixed(1)}l2000 -424`;
      if (i % 4 === 1) major += line; else if (i % 2) minor += line;
    }
    return `<path d="${minor}" stroke="#dfdfdf" stroke-width=".8"/><path d="${major}" stroke="#c2c2c2" stroke-width=".8"/>`;
  }

  ticks() {
    let out = '';
    for (let x = 45; x < 1380; x += 121) {
      const y = 813 + x * 0.0967;
      out += `<path d="M${x - 8} ${y}l12-3M${x + 1} ${y - 4}h5M${x + 9} ${y - 4}h3M${x + 46} ${y + 4}h10" fill="none" stroke="#777" stroke-width="1.3"/>`;
    }
    return out;
  }

  render() {
    return `
      <svg viewBox="0 209 1920 737" preserveAspectRatio="xMinYMin slice" role="img" aria-label="Model view">
        <defs>
          <clipPath id="ground"><path d="M0 813L1630 468 1920 460V1000L1385 947z"/></clipPath>
          <filter id="soft" x="-10%" y="-40%" width="120%" height="180%"><feGaussianBlur stdDeviation="4"/></filter>
          <linearGradient id="side" gradientUnits="userSpaceOnUse" x1="842" y1="597" x2="821" y2="816">
            <stop offset="0" stop-color="#8b8e86"/><stop offset=".025" stop-color="#7b7d76"/><stop offset=".055" stop-color="#3f3e38"/>
            <stop offset=".1" stop-color="#2d2c28"/><stop offset=".17" stop-color="#37352f"/><stop offset=".21" stop-color="#302f2a"/>
            <stop offset=".26" stop-color="#3f3d39"/><stop offset=".31" stop-color="#22211e"/><stop offset=".39" stop-color="#181714"/>
            <stop offset=".44" stop-color="#1f1f1d"/><stop offset=".485" stop-color="#3a3a38"/><stop offset=".54" stop-color="#20201e"/>
            <stop offset=".59" stop-color="#373735"/><stop offset=".66" stop-color="#2b2b2a"/><stop offset=".76" stop-color="#181816"/>
            <stop offset=".89" stop-color="#1c1b19"/><stop offset=".95" stop-color="#2f2d28"/><stop offset=".985" stop-color="#6f6b60"/>
            <stop offset="1" stop-color="#a8a498"/>
          </linearGradient>
          <linearGradient id="front" x2="0" y2="1"><stop offset="0" stop-color="#85837a"/><stop offset="1" stop-color="#8f8f86"/></linearGradient>
          <linearGradient id="slot"><stop offset="0" stop-color="#444b4b"/><stop offset="1" stop-color="#7f8989"/></linearGradient>
          <linearGradient id="vc" x2="0" y2="1"><stop offset="0" stop-color="#c9d0d1"/><stop offset="1" stop-color="#a9adac"/></linearGradient>
        </defs>

        <g clip-path="url(#ground)">
          <path d="M0 450h1920v500H0z" fill="#f2f2f2"/>
          ${this.grid()}
          <path d="M640 677l700 68" stroke="#ff6b6b" stroke-width="1.4" opacity=".8"/>
          <path d="M582 868L1223 732" stroke="#6ff26f" stroke-width="1.5"/>
        </g>
        <path d="M0 813L1640 466M0 813L1385 947" stroke="#5a5a5a" stroke-width="1.3"/>
        ${this.ticks()}

        <path d="M795 824l35-8 300 26 50-12-8 18-95 12z" fill="#9f9f9f" opacity=".7" filter="url(#soft)"/>
        <path d="M845 597L1147 626 1128 844 826 815A60 109 5.5 0 1 845 597z" fill="url(#side)"/>
        <path d="M845 597A60 109 5.5 0 0 826 815" fill="none" stroke="#111" stroke-width="1.6"/>
        <path d="M845 597L1147 626M826 815l302 29" stroke="#222" stroke-width="1.6" stroke-dasharray="2 13"/>
        <ellipse cx="1137" cy="735" rx="61" ry="109" transform="rotate(4 1137 735)" fill="#333331" stroke="#0b0b0b" stroke-width="1.8"/>

        <path d="M1223 300L1654 209H1920V420H1223z" fill="#b4c0bd"/>
        <path d="M1223 300L1920 366V799L1223 732z" fill="url(#front)"/>
        <path d="M1223 300V732" stroke="#111" stroke-width="1.8"/>
        <path d="M1223 300L1654 209" stroke="#111" stroke-width="1.6" stroke-dasharray="5 2"/>
        <path d="M1223 300L1700 345" stroke="#222" stroke-width="1.6" stroke-dasharray="10 1"/>
        <path d="M1223 732l700 67" stroke="#a01919" stroke-width="1.6"/>
        <path d="M1364 288L1652 229 1920 256V264L1668 317z" fill="#acc1c5"/>
        <path d="M1740 209L1920 229V209z" fill="#acc1c5"/>
        <path d="M1364 288l30-7q-4 5 5 10zM1725 209h45q-10 4 0 5l-30-3z" fill="#5f7379"/>
        <path d="M1920 255L1652 229 1364 288 1668 317 1920 264M1732 209l188 20" fill="none" stroke="#5cbbec" stroke-width="3"/>
        <path d="M1625 238l27-4 56 2M1612 309l56 3 38-5" fill="none" stroke="#2f6580" stroke-width="1.1"/>
        <path d="M1458 298Q1440 297 1445 305 1470 314 1520 314 1560 313 1576 309z" fill="url(#slot)" stroke="#1b1b1b" stroke-width="1.2"/>
        <path d="M1823 220Q1808 222 1812 228 1840 238 1920 234V230z" fill="url(#slot)" stroke="#1b1b1b" stroke-width="1.2"/>
        <path d="M1457 298v11M1823 220v11" stroke="#222"/>
        <path d="M1789 328L1910 303l10 2v60L1789 328z" fill="#788180"/>
        <path d="M1789 328L1910 303l10 1M1910 303v40M1789 328l90 10" fill="none" stroke="#111" stroke-width="1.6"/>
        <g fill="#e7efef" stroke="#7c8b8d" stroke-width="1.2">
          <circle cx="1670" cy="242" r="6"/><circle cx="1466" cy="285" r="6"/><circle cx="1647" cy="302" r="6"/><circle cx="1833" cy="208" r="6"/>
        </g>

        <path d="M1830 300l50 14 36-10-30-10z" fill="#7d8786" opacity=".5"/>
        <path d="M1818 251H1860V308L1818 302z" fill="url(#vc)" opacity=".9"/>
        <path d="M1860 251H1886V298L1860 308z" fill="#b9bfc0" opacity=".9"/>
        <path d="M1818 251H1886V298L1860 308V251" fill="none" stroke="#6f7878" stroke-dasharray="7 3"/>
        <circle cx="1852" cy="260" r="6" fill="#e7eeee" stroke="#aab" opacity=".9"/>
        <path d="M1818 244v58" stroke="#3c3ce8" stroke-width="2"/>
        <path d="M1819 302l52 11" stroke="#c94949" stroke-width="2.4"/>
        <g font-family="Liberation Sans, Arial, sans-serif">
          <text x="1823" y="283" font-size="10" fill="#5b6263">FRONT</text>
          <text x="1864" y="282" font-size="10" fill="#5b6263">GEF</text>
          <text x="1812" y="241" font-size="13" fill="#6b6be6">Z</text>
          <text x="1872" y="319" font-size="13" fill="#cf4a4a">X</text>
        </g>
      </svg>`;
  }
}

class NavBar extends FusionElement {
  styles() {
    return `
      .bar { display: flex; align-items: center; gap: 15px; height: 36px; padding: 0 11px 0 5px; background: var(--panel); color: #333; }
      .menu { gap: 7px; margin-right: -6px; }
      .tight { gap: 2px; margin-right: -5px; }`;
  }
  render() {
    return `
      <div class="bar">
        <button class="menu" aria-label="Orbit">${icon('orbit')}${icon('caret')}</button>
        ${iconButton('look', 'Look at')}${iconButton('hand', 'Pan')}${iconButton('zoom', 'Zoom')}
        <button class="menu" aria-label="Fit">${icon('zoomfit')}${icon('caret')}</button>
        <button class="tight" aria-label="Display settings">${icon('monitor')}${icon('caret')}</button>
        <button class="tight" aria-label="Grid and snaps">${icon('mesh')}${icon('caret')}</button>
        <button class="tight" aria-label="Viewports">${icon('views')}${icon('caret')}</button>
      </div>`;
  }
}

class MaterialSwatch extends FusionElement {
  styles() {
    return `
      button { display: block; padding: 3px; background: #fff; border: 3px solid #fff; }
      :host([active]) button { border-color: #c4c4c4; }
      svg { display: block; }`;
  }
  render() {
    return `<button aria-label="Material">${torus(this.hasAttribute('dark'))}</button>`;
  }
}

class AppearancePanel extends FusionElement {
  styles() {
    return `
      :host { background: var(--panel); border: 2px solid #cfcfcf; }
      header { display: flex; align-items: center; height: 36px; padding: 0 5px 0 1px; border-bottom: 2px solid #cfcfcf; font-size: 15px; color: #666; }
      header .title { flex: 1; margin-left: 6px; line-height: 20px; }
      header .fold { margin-left: 10px; }
      .body { display: flex; }
      .content { flex: 1; padding: 13px 6px 3px 1px; }
      .bar { width: 9px; margin-right: 3px; border-radius: 5px 5px 0 0; background: linear-gradient(#999 200px, #c4c4c6 200px); }
      section { padding-left: 12px; }
      section + section { border-top: 2px solid #cbcbcb; padding-top: 19px; }
      h2 { display: flex; align-items: center; gap: 9px; margin: 0; font-size: 17px; line-height: 20px; color: #333; }
      .apply { padding-bottom: 8px; }
      .apply h2 { margin-bottom: 11px; }
      .option { display: flex; align-items: center; height: 45px; padding-left: 5px; }
      .option label { width: 170px; line-height: 20px; }
      input[type=radio] { appearance: none; width: 22px; height: 22px; margin: 0; border: 2px solid #444; border-radius: 50%; background: linear-gradient(#f4f4f4, #b9b9b9); }
      input[type=radio]:checked { background: radial-gradient(#000 0 6px, #e3e3e3 7px); }
      .design { padding-bottom: 11px; }
      .materials { height: 167px; margin: 15px 28px 0 0; padding: 6px; background: #f9f9f9; }
      .swatches { display: flex; }
      .tip { display: inline-block; margin-top: 8px; padding: 0 23px; border-radius: 16px; background: #505050; font: bold 17px/32px var(--ui); color: #fff; white-space: nowrap; }
      .search { display: flex; align-items: center; height: 34px; margin: 13px 28px 0 0; padding: 0 6px 0 3px; border: 2px solid #767676; }
      .search input { flex: 1; min-width: 0; padding: 8px 0 0; border: 0; outline: 0; background: none; font: 16px/22px var(--ui); color: #555; }
      .search input::placeholder { color: #777; opacity: 1; }
      footer { display: flex; align-items: center; justify-content: space-between; height: 54px; padding: 0 16px 0 11px; border-top: 2px solid #cbcbcb; }
      footer .close { width: 90px; height: 29px; border: 2px solid #c4c4c4; background: #e9e9e9; font-size: 18px; line-height: 22px; color: #777; }`;
  }
  render() {
    return `
      <header>${icon('gripleft')}<button class="fold" aria-label="Toggle panel">${icon('minus')}</button><span class="title">APPEARANCE</span>${iconButton('forwardpanel', 'Collapse')}</header>
      <div class="body">
        <div class="content">
          <section class="apply">
            <h2>${icon('triangle')}Apply To:</h2>
            <div class="option"><label for="bodies">Bodies/Components</label><input type="radio" id="bodies" name="target" checked></div>
            <div class="option"><label for="faces">Faces</label><input type="radio" id="faces" name="target"></div>
          </section>
          <section class="design">
            <h2>${icon('triangle')}In This Design</h2>
            <div class="materials">
              <div class="swatches"><material-swatch></material-swatch><material-swatch dark active></material-swatch></div>
              <span class="tip">Plastic - Glossy (Black)</span>
            </div>
          </section>
          <section>
            <h2>${icon('triangle')}Library</h2>
            <div class="search"><input type="text" placeholder="Search" aria-label="Search">${icon('lens')}</div>
          </section>
        </div>
        <div class="bar"></div>
      </div>
      <footer>${icon('info')}<button class="close">Close</button></footer>`;
  }
}

class TimeLine extends FusionElement {
  styles() {
    return `
      :host { background: var(--panel); border-top: 2px solid #dcdcdc; }
      .bar { display: flex; align-items: center; height: 72px; padding: 0 20px 0 16px; }
      .play { display: flex; align-items: center; gap: 18px; width: 203px; }
      .track { display: flex; height: 48px; margin-top: 2px; }
      ol { display: flex; margin: 9px 0 0; padding: 0; height: 39px; list-style: none; border-bottom: 3px solid #c9c9c9; }
      li { width: 36px; height: 100%; }
      li button { display: flex; }
      li::after { content: ""; display: block; width: 3px; height: 8px; margin: 3px 0 0 12px; background: #c9c9c9; }
      li fusion-icon { height: 25px; }
      li:last-child { width: 15px; }
      .marker { margin-left: 6px; }
      .gear { margin-left: auto; }`;
  }
  render() {
    const S = 'sketch', E = 'solid', O = 'sphere';
    const steps = [S, E, S, E, E, O, O, S, E, E, S, E, S, E, O, O, S, S, S, S, S, E];
    return `
      <div class="bar">
        <div class="play">
          ${iconButton('tostart', 'Go to start')}${iconButton('back', 'Step back')}${iconButton('play', 'Play')}${iconButton('next', 'Step forward')}${iconButton('toend', 'Go to end')}
        </div>
        <div class="track">
          <ol>${steps.map(s => `<li>${iconButton(s, 'Feature')}</li>`).join('')}</ol>
          <span class="marker">${icon('marker')}</span>
        </div>
        <button class="gear" aria-label="Timeline settings">${icon('gear')}</button>
      </div>`;
  }
}

class TaskBar extends FusionElement {
  styles() {
    return `
      :host { background: #1e2129; color: #fff; font-family: var(--ui); }
      .bar { display: flex; align-items: stretch; height: 60px; }
      .start { width: 72px; }
      .find { display: flex; align-items: center; gap: 18px; width: 432px; padding: 0 16px; border: 2px solid #bdbdbd; background: #f2f2f2; }
      .find input { flex: 1; min-width: 0; padding: 4px 0 0; border: 0; outline: 0; background: none; font: 20px/28px var(--ui); color: #222; }
      .find input::placeholder { color: #2b2b2b; opacity: 1; }
      .view { width: 73px; }
      .apps { display: flex; padding-left: 4px; gap: 2px; }
      .app { position: relative; width: 73px; }
      .app::after { content: ""; position: absolute; left: 6px; right: 6px; bottom: 0; height: 3px; background: #76b9ed; }
      .app.on { background: #4c4c51; }
      .app.on::after { left: 0; right: 0; }
      .app.stack::after { background: linear-gradient(90deg, #76b9ed 77%, #5690bd 77%); }
      .mark { position: absolute; inset: 0; display: flex; flex-direction: column; align-items: center; font-weight: bold; font-family: "Liberation Sans", sans-serif; }
      .mark b { font-size: 19px; line-height: 26px; padding: 12px 0 0 3px; }
      .mark i { font-size: 8px; line-height: 10px; font-style: normal; padding-left: 2px; }
      .tray { margin-left: auto; display: flex; align-items: center; }
      .weather { gap: 10px; font-size: 20px; line-height: 28px; margin-right: 44px; white-space: pre; }
      .icons { display: flex; align-items: center; gap: 27px; padding-top: 2px; }
      .lang { margin: 0 24px 0 30px; font-size: 16px; }
      .tray .clock { flex-direction: column; width: 78px; font-size: 17px; line-height: 27px; white-space: nowrap; }
      .note { margin: 0 30px 0 31px; }
      .peek { align-self: stretch; width: 6px; border-left: 2px solid #777b82; }`;
  }
  render() {
    const app = (name, label, cls = '') => `<button class="app ${cls}" aria-label="${label}">${icon(name)}</button>`;
    return `
      <div class="bar">
        <button class="start" aria-label="Start">${icon('windows')}</button>
        <div class="find">${icon('search')}<input type="text" placeholder="Type here to search" aria-label="Type here to search"></div>
        <button class="view" aria-label="Task view">${icon('taskview')}</button>
        <div class="apps">
          ${app('chrome1', 'Chrome', 'stack')}
          ${app('spotify', 'Spotify')}
          <button class="app on">${icon('fusion')}<span class="mark"><b>F</b><i>360</i></span></button>
          ${app('chrome2', 'Chrome')}
          ${app('explorer', 'File Explorer')}
          ${app('photos', 'Photos', 'stack')}
        </div>
        <div class="tray">
          <button class="weather">${icon('sun')}<span>62°F  Sunny</span></button>
          <div class="icons">
            ${iconButton('chevron', 'Hidden icons')}${iconButton('camera', 'Meet now')}${iconButton('battery', 'Battery')}${iconButton('cloud', 'OneDrive')}${iconButton('pen', 'Ink')}
          </div>
          <button class="lang">ENG</button>
          <button class="clock"><span>7:50 PM</span><span>4/9/2023</span></button>
          <button class="note" aria-label="Notifications">${icon('notify')}</button>
          <span class="peek"></span>
        </div>
      </div>`;
  }
}

class FusionApp extends FusionElement {
  styles() {
    return `
      :host { display: flex; flex-direction: column; height: 100%; }
      main { position: relative; flex: 1; min-height: 0; margin-top: 2px; }
      .overlay { position: relative; display: grid; grid-template-columns: 450px 1fr 630px; grid-template-rows: 1fr; height: 100%; padding: 6px; }
      .left { grid-area: 1 / 1; display: flex; flex-direction: column; gap: 7px; }
      .comments { margin-top: auto; }
      nav-bar { grid-area: 1 / 1 / 2 / -1; place-self: end center; }
      appearance-panel { grid-area: 1 / 3; align-self: start; margin-top: 124px; }`;
  }
  render() {
    return `
      <title-bar></title-bar>
      <document-tabs></document-tabs>
      <ribbon-bar></ribbon-bar>
      <main>
        <scene-view></scene-view>
        <div class="overlay">
          <div class="left">
            <panel-header collapse action="minus">BROWSER</panel-header>
            <browser-tree></browser-tree>
            <panel-header class="comments" action="add">COMMENTS</panel-header>
          </div>
          <nav-bar></nav-bar>
          <appearance-panel></appearance-panel>
        </div>
      </main>
      <time-line></time-line>
      <task-bar></task-bar>`;
  }
}

customElements.define('fusion-icon', FusionIcon);
customElements.define('title-bar', TitleBar);
customElements.define('document-tabs', DocumentTabs);
customElements.define('ribbon-group', RibbonGroup);
customElements.define('ribbon-bar', RibbonBar);
customElements.define('panel-header', PanelHeader);
customElements.define('tree-row', TreeRow);
customElements.define('browser-tree', BrowserTree);
customElements.define('scene-view', SceneView);
customElements.define('nav-bar', NavBar);
customElements.define('material-swatch', MaterialSwatch);
customElements.define('appearance-panel', AppearancePanel);
customElements.define('time-line', TimeLine);
customElements.define('task-bar', TaskBar);
customElements.define('fusion-app', FusionApp);
</script>
</body>
</html>
